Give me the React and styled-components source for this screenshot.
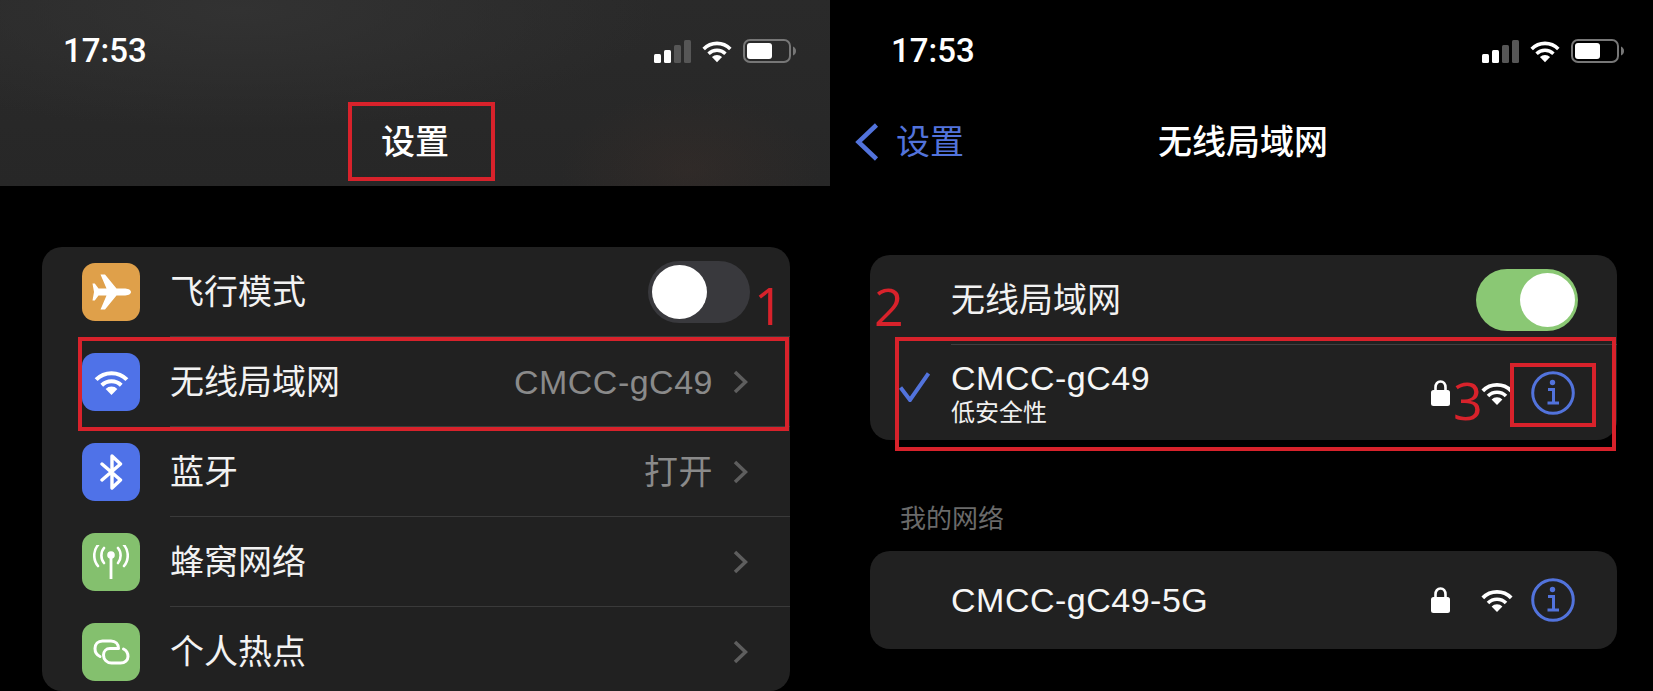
import React from "react";
import styled, { createGlobalStyle } from "styled-components";

const FONT = `"Liberation Sans", "Noto Sans CJK SC", sans-serif`;
const RED = "#d8222b";
const BLUE = "#5273dc";

const GlobalStyle = createGlobalStyle`
  html, body {
    margin: 0;
    background: #000;
    overflow: hidden;
  }
  * {
    box-sizing: border-box;
  }
`;

function Wifi({ width, height }) {
  return (
    <svg width={width} height={height} viewBox="0 0 32 24" fill="none">
      <path d="M1.8 9.8A20 20 0 0 1 30.2 9.8" stroke="#fff" strokeWidth="3.8" />
      <path d="M7 15A12.7 12.7 0 0 1 25 15" stroke="#fff" strokeWidth="3.6" />
      <path d="M16 24L10.6 18.4A7.6 7.6 0 0 1 21.4 18.4Z" fill="#fff" />
    </svg>
  );
}

function Battery() {
  return (
    <svg width="53" height="24" viewBox="0 0 53 24" fill="none">
      <rect x="1" y="1" width="46" height="22" rx="6" stroke="#777" strokeWidth="2" />
      <rect x="4" y="4" width="25" height="16" rx="3" fill="#fff" />
      <path d="M50 7.500C52 8.500 53 10 53 12C53 14 52 15.500 50 16.500Z" fill="#777" />
    </svg>
  );
}

function Signal() {
  return (
    <svg width="37" height="23" viewBox="0 0 37 23">
      <rect x="0" y="14" width="7" height="9" rx="1.500" fill="#fff" />
      <rect x="10" y="10" width="7" height="13" rx="1.500" fill="#fff" />
      <rect x="20" y="5" width="7" height="18" rx="1.500" fill="#565656" />
      <rect x="30" y="0" width="7" height="23" rx="1.500" fill="#565656" />
    </svg>
  );
}

function Plane() {
  return (
    <svg width="39" height="36" viewBox="0 0 39 36">
      <path
        d="M39 18C39 15.500 35.500 14.500 32 14.500L24.500 14.500L13 0.500L8.500 0.500L14.500 14.500L6.500 14.500L2.800 9.500L0.500 9.500L2 18L0.500 26.500L2.800 26.500L6.500 21.500L14.500 21.500L8.500 35.500L13 35.500L24.500 21.500L32 21.500C35.500 21.500 39 20.500 39 18Z"
        fill="#fff"
      />
    </svg>
  );
}

function Bluetooth() {
  return (
    <svg width="23" height="36" viewBox="0 0 23 36" fill="none">
      <path
        d="M2 10L20.500 26L12 34V2L20.500 10L2 26"
        stroke="#fff"
        strokeWidth="3.400"
        strokeLinecap="round"
        strokeLinejoin="round"
      />
    </svg>
  );
}

function Antenna() {
  return (
    <svg width="36" height="34" viewBox="0 0 36 34" fill="none">
      <circle cx="18" cy="10" r="3.800" fill="#fff" />
      <path d="M18 10V34" stroke="#fff" strokeWidth="2.800" strokeLinecap="round" />
      <path
        d="M11 3C7.500 7 7.500 14 11 18M25 3C28.500 7 28.500 14 25 18M5 0C0 6 0 15 5 21M31 0C36 6 36 15 31 21"
        stroke="#fff"
        strokeWidth="2.600"
        strokeLinecap="round"
      />
    </svg>
  );
}

function Links() {
  return (
    <svg width="37" height="26" viewBox="0 0 37 26" fill="none">
      <path
        d="M7 17.500C3.800 16 2 13 2 9.500C2 5 5 2 9.500 2H18C22.500 2 25.500 5 25.500 9.500H17C13 9.500 10.500 12.500 10.500 16C10.500 20.500 14 24 18.500 24H27.500C32 24 35 21 35 17.500C35 14 33.500 11.500 30.500 10"
        stroke="#fff"
        strokeWidth="3"
        strokeLinecap="round"
        strokeLinejoin="round"
      />
    </svg>
  );
}

function Lock() {
  return (
    <svg width="19" height="26" viewBox="0 0 19 26" fill="none">
      <path d="M4.500 12V7.500C4.500 4 6.500 1.500 9.500 1.500C12.500 1.500 14.500 4 14.500 7.500V12" stroke="#fff" strokeWidth="2.600" />
      <rect x="0" y="10" width="19" height="16" rx="2.500" fill="#fff" />
    </svg>
  );
}

function Info() {
  return (
    <svg width="44" height="44" viewBox="0 0 44 44" fill="none">
      <circle cx="22" cy="22" r="20.300" stroke={BLUE} strokeWidth="3" />
      <circle cx="21.500" cy="11.500" r="2.700" fill={BLUE} />
      <path d="M17 18.500H22.500V32M16.500 32H28" stroke={BLUE} strokeWidth="3" />
    </svg>
  );
}

function Chevron() {
  return (
    <svg width="15" height="24" viewBox="0 0 15 24" fill="none">
      <path d="M2 2L12.500 12L2 22" stroke="#5e5e5e" strokeWidth="3.500" />
    </svg>
  );
}

function BackChevron() {
  return (
    <svg width="24" height="38" viewBox="0 0 24 38" fill="none">
      <path d="M21.500 2L3.500 19L21.500 36" stroke={BLUE} strokeWidth="4.500" />
    </svg>
  );
}

function Check() {
  return (
    <svg width="31" height="30" viewBox="0 0 31 30" fill="none">
      <path d="M1.500 15.500L11 28L29.500 1.500" stroke={BLUE} strokeWidth="4" />
    </svg>
  );
}

function StatusIcons() {
  return (
    <StatusGroup>
      <Signal />
      <Wifi width={30} height={24} />
      <Battery />
    </StatusGroup>
  );
}

const settings = [
  { name: "飞行模式", tile: "#dfa04a", glyph: <Plane />, toggle: true },
  { name: "无线局域网", tile: "#4f72e8", glyph: <Wifi width={35} height={26} />, value: "CMCC-gC49" },
  { name: "蓝牙", tile: "#4f72e8", glyph: <Bluetooth />, value: "打开" },
  { name: "蜂窝网络", tile: "#84c06e", glyph: <Antenna /> },
  { name: "个人热点", tile: "#84c06e", glyph: <Links /> },
];

export default function App() {
  return (
    <Page>
      <GlobalStyle />
      <LeftPhone>
        <Header $filled>
          <StatusBar>
            <Time>17:53</Time>
            <StatusIcons />
          </StatusBar>
          <NavBar>
            <span />
            <NavTitle>设置</NavTitle>
            <span />
          </NavBar>
        </Header>
        <SettingsCard>
          {settings.map((item, index) => (
            <SettingRow key={item.name}>
              <Tile $color={item.tile}>{item.glyph}</Tile>
              <SettingBody $last={index === settings.length - 1}>
                <RowName>{item.name}</RowName>
                {item.toggle ? (
                  <Toggle>
                    <Knob />
                  </Toggle>
                ) : (
                  <RowEnd>
                    {item.value && <RowValue>{item.value}</RowValue>}
                    <Chevron />
                  </RowEnd>
                )}
              </SettingBody>
            </SettingRow>
          ))}
        </SettingsCard>
      </LeftPhone>

      <RightPhone>
        <Header>
          <StatusBar>
            <Time>17:53</Time>
            <StatusIcons />
          </StatusBar>
          <NavBar>
            <BackLink>
              <BackChevron />
              <span>设置</span>
            </BackLink>
            <NavTitle>无线局域网</NavTitle>
            <span />
          </NavBar>
        </Header>

        <WifiCard>
          <WifiToggleRow>
            <RowName>无线局域网</RowName>
            <Toggle $on>
              <Knob />
            </Toggle>
          </WifiToggleRow>
          <NetworkRow $height={96}>
            <CheckSlot>
              <Check />
            </CheckSlot>
            <NetworkBody $divider>
              <div>
                <NetworkName>CMCC-gC49</NetworkName>
                <NetworkNote>低安全性</NetworkNote>
              </div>
              <NetworkIcons>
                <Lock />
                <Wifi width={32} height={24} />
                <Info />
              </NetworkIcons>
            </NetworkBody>
          </NetworkRow>
        </WifiCard>

        <SectionLabel>我的网络</SectionLabel>

        <NetworkCard>
          <NetworkRow $height={98}>
            <CheckSlot />
            <NetworkBody>
              <NetworkName>CMCC-gC49-5G</NetworkName>
              <NetworkIcons>
                <Lock />
                <Wifi width={32} height={24} />
                <Info />
              </NetworkIcons>
            </NetworkBody>
          </NetworkRow>
        </NetworkCard>
      </RightPhone>

      <Marker $x={348} $y={102} $w={147} $h={79} />
      <Marker $x={78} $y={337} $w={711} $h={94} />
      <Marker $x={895} $y={337} $w={721} $h={114} />
      <Marker $x={1510} $y={363} $w={86} $h={64} />
      <Step $x={754} $y={270}>1</Step>
      <Step $x={874} $y={271}>2</Step>
      <Step $x={1453} $y={365}>3</Step>
    </Page>
  );
}

const Page = styled.div`
  position: relative;
  display: flex;
  width: 1653px;
  height: 691px;
  overflow: hidden;
  background: #000;
  font-family: ${FONT};
  color: #fff;
`;
const LeftPhone = styled.div`
  width: 828px;
  flex: none;
`;
const RightPhone = styled(LeftPhone)`
  width: 825px;
`;
const Header = styled.header`
  height: 186px;
  width: 830px;
  background: ${(p) =>
    p.$filled
      ? `radial-gradient(ellipse 130px 80px at 690px 170px, rgba(70, 50, 42, 0.28), transparent),
         radial-gradient(ellipse 420px 120px at 240px 10px, #323232, transparent),
         linear-gradient(#2a2a2a, #272727)`
      : "transparent"};
`;
const StatusBar = styled.div`
  display: flex;
  align-items: center;
  justify-content: space-between;
  width: 796px;
  height: 102px;
  padding-left: 63px;
`;
const Time = styled.span`
  font-family: Roboto, ${FONT};
  font-weight: 500;
  font-size: 33px;
  line-height: 40px;
`;
const StatusGroup = styled.div`
  display: flex;
  align-items: center;
  gap: 11px;
`;
const NavBar = styled.div`
  display: grid;
  grid-template-columns: 1fr auto 1fr;
  align-items: center;
  width: 830px;
  height: 80px;
`;
const NavTitle = styled.h1`
  margin: 0;
  font-size: 34px;
  line-height: 40px;
  font-weight: 500;
`;
const BackLink = styled.a`
  display: flex;
  align-items: center;
  gap: 17px;
  padding-left: 27px;
  font-size: 34px;
  line-height: 40px;
  color: ${BLUE};
`;
const SettingsCard = styled.section`
  width: 748px;
  height: 444px;
  margin: 61px 0 0 42px;
  border-radius: 20px;
  background: #212121;
  overflow: hidden;
`;
const SettingRow = styled.div`
  display: flex;
  align-items: center;
  height: 90px;
  padding-left: 40px;
`;
const Tile = styled.div`
  display: flex;
  align-items: center;
  justify-content: center;
  width: 58px;
  height: 58px;
  flex: none;
  border-radius: 13px;
  background: ${(p) => p.$color};
`;
const SettingBody = styled.div`
  display: flex;
  align-items: center;
  justify-content: space-between;
  flex: 1;
  height: 100%;
  margin-left: 30px;
  padding-right: 40px;
  border-bottom: 1px solid ${(p) => (p.$last ? "transparent" : "#3a3a3a")};
`;
const RowName = styled.span`
  font-size: 34px;
  line-height: 40px;
  color: #f2f2f2;
`;
const RowEnd = styled.div`
  display: flex;
  align-items: center;
  gap: 20px;
  padding-right: 2px;
`;
const RowValue = styled.span`
  font-size: 34px;
  line-height: 40px;
  letter-spacing: 0.5px;
  color: #8a8a8a;
`;
const Toggle = styled.div`
  display: flex;
  align-items: center;
  justify-content: ${(p) => (p.$on ? "flex-end" : "flex-start")};
  width: 102px;
  height: 62px;
  padding: 0 ${(p) => (p.$on ? "3px" : "0")} 0 ${(p) => (p.$on ? "0" : "4px")};
  border-radius: 31px;
  background: ${(p) => (p.$on ? "#8ac874" : "#39393d")};
`;
const Knob = styled.span`
  width: 55px;
  height: 54px;
  border-radius: 50%;
  background: #fff;
`;
const WifiCard = styled.section`
  width: 747px;
  margin: 69px 0 0 42px;
  border-radius: 20px;
  background: #212121;
`;
const NetworkCard = styled(WifiCard)`
  margin-top: 0;
`;
const WifiToggleRow = styled.div`
  display: flex;
  align-items: center;
  justify-content: space-between;
  height: 89px;
  padding: 0 39px 0 81px;
`;
const NetworkRow = styled.div`
  display: flex;
  height: ${(p) => p.$height}px;
`;
const CheckSlot = styled.div`
  display: flex;
  align-items: center;
  width: 81px;
  flex: none;
  padding: 0 0 11px 29px;
`;
const NetworkBody = styled.div`
  display: flex;
  align-items: center;
  justify-content: space-between;
  flex: 1;
  padding-right: 42px;
  border-top: ${(p) => (p.$divider ? "1px solid #3f3f3f" : "none")};
`;
const NetworkName = styled.div`
  font-size: 34px;
  line-height: 40px;
  letter-spacing: 0.5px;
  color: #f6f6f6;
`;
const NetworkNote = styled.div`
  font-size: 24px;
  line-height: 29px;
  color: #f0f0f0;
`;
const NetworkIcons = styled.div`
  display: flex;
  align-items: center;
  & > svg:nth-child(1) {
    margin-right: 31px;
  }
  & > svg:nth-child(2) {
    margin-right: 18px;
  }
`;
const SectionLabel = styled.h2`
  margin: 64px 0 17px 72px;
  font-size: 26px;
  line-height: 30px;
  font-weight: 400;
  color: #6a6a6a;
`;
const Marker = styled.div`
  position: absolute;
  left: ${(p) => p.$x}px;
  top: ${(p) => p.$y}px;
  width: ${(p) => p.$w}px;
  height: ${(p) => p.$h}px;
  border: 4px solid ${RED};
`;
const Step = styled.span`
  position: absolute;
  left: ${(p) => p.$x}px;
  top: ${(p) => p.$y}px;
  font-family: "Open Sans", sans-serif;
  font-weight: 400;
  font-size: 52px;
  line-height: 70px;
  color: ${RED};
`;
